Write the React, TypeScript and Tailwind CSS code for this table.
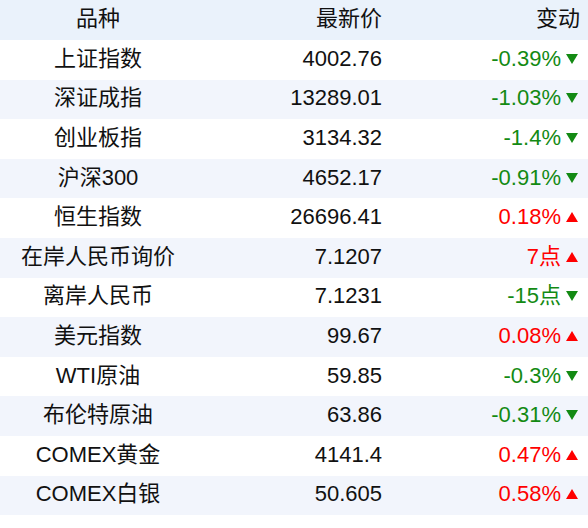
import React from 'react';

type Row = { name: string; price: string; change: string; up: boolean };

const rows: Row[] = [
  { name: '上证指数', price: '4002.76', change: '-0.39%', up: false },
  { name: '深证成指', price: '13289.01', change: '-1.03%', up: false },
  { name: '创业板指', price: '3134.32', change: '-1.4%', up: false },
  { name: '沪深300', price: '4652.17', change: '-0.91%', up: false },
  { name: '恒生指数', price: '26696.41', change: '0.18%', up: true },
  { name: '在岸人民币询价', price: '7.1207', change: '7点', up: true },
  { name: '离岸人民币', price: '7.1231', change: '-15点', up: false },
  { name: '美元指数', price: '99.67', change: '0.08%', up: true },
  { name: 'WTI原油', price: '59.85', change: '-0.3%', up: false },
  { name: '布伦特原油', price: '63.86', change: '-0.31%', up: false },
  { name: 'COMEX黄金', price: '4141.4', change: '0.47%', up: true },
  { name: 'COMEX白银', price: '50.605', change: '0.58%', up: true },
];

const Arrow = ({ up }: { up: boolean }) => (
  <svg width="12" height="10" viewBox="0 0 12 10" className="ml-[5px] shrink-0">
    {up ? (
      <polygon points="6,0 12,10 0,10" fill="#ff0000" />
    ) : (
      <polygon points="0,0 12,0 6,10" fill="#138a13" />
    )}
  </svg>
);

export default function App() {
  return (
    <div
      className="w-[588px] h-[528px] bg-white text-[22px] text-[#111] leading-none"
      style={{ fontFamily: '"Liberation Sans", Arial, "Noto Sans CJK SC", sans-serif' }}
    >
      {/* Header */}
      <div className="grid grid-cols-[196px_195px_197px] h-[40px] bg-[#eaf2fb] gap-x-px">
        <div className="flex items-center justify-center pb-[2px]">品种</div>
        <div className="flex items-center justify-end pr-[10px] pb-[2px]">最新价</div>
        <div className="flex items-center justify-end pr-[10px] pb-[2px]">变动</div>
      </div>

      {rows.map((r, i) => (
        <div
          key={r.name}
          className={`grid grid-cols-[196px_195px_197px] h-[39.6px] gap-x-px ${
            i % 2 === 1 ? 'bg-[#f2f5fc]' : 'bg-white'
          }`}
        >
          <div className="flex items-center justify-center pb-[2px]">{r.name}</div>
          <div className="flex items-center justify-end pr-[10px] pb-[2px]">{r.price}</div>
          <div
            className={`flex items-center justify-end pr-[12px] pb-[2px] ${
              r.up ? 'text-[#ff0000]' : 'text-[#138a13]'
            }`}
          >
            {r.change}
            <Arrow up={r.up} />
          </div>
        </div>
      ))}
    </div>
  );
}
